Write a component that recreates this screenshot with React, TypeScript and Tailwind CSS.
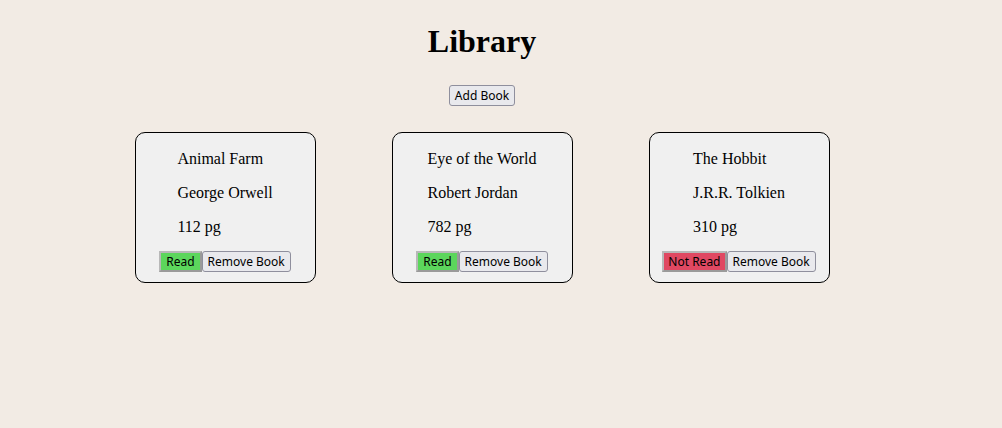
import { ReactElement } from "react";

type Book = { title: string; author: string; pages: number; read: boolean };

const books: Book[] = [
  { title: "Animal Farm", author: "George Orwell", pages: 112, read: true },
  { title: "Eye of the World", author: "Robert Jordan", pages: 782, read: true },
  { title: "The Hobbit", author: "J.R.R. Tolkien", pages: 310, read: false },
];

const btn =
  "h-[21px] px-[5px] text-[12px] leading-none rounded-[3px] border border-[#8f8f9d] bg-[#e9e9ed] text-black";

export default function App(): ReactElement {
  return (
    <div className="w-full h-screen bg-[#f2ebe4] font-['Liberation_Serif',serif] text-black">
      <div className="w-[964px] flex flex-col items-center">
        <h1 className="mt-[23px] text-[32px] leading-[37px] font-bold">Library</h1>
        <button className={`${btn} mt-[25px] font-['Noto_Sans',sans-serif]`}>Add Book</button>
        <div className="mt-[26px] flex gap-[76px]">
          {books.map((book, index) => {
            return (
              <div
                key={index}
                className="w-[181px] h-[151px] border border-black rounded-[10px] bg-[#f0f0f0] flex flex-col items-center"
              >
                <div className="flex flex-col items-start text-[16px] leading-[18px] pt-[17px] gap-[16px]">
                  <p>{book.title}</p>
                  <p>{book.author}</p>
                  <p>{book.pages} pg</p>
                </div>
                <div className="mt-[15px] flex font-['Noto_Sans',sans-serif]">
                  {book.read ? (
                    <button className="h-[21px] px-[5px] text-[12px] leading-none border-2 border-[#9a9a9a] border-t-[#b8b8b8] border-l-[#b8b8b8] bg-[#5cd65c]">
                      Read
                    </button>
                  ) : (
                    <button className="h-[21px] px-[4px] text-[12px] leading-none border-2 border-[#9a9a9a] border-t-[#b8b8b8] border-l-[#b8b8b8] bg-[#e04862]">
                      Not Read
                    </button>
                  )}
                  <button className={btn}>Remove Book</button>
                </div>
              </div>
            );
          })}
        </div>
      </div>
    </div>
  );
}
